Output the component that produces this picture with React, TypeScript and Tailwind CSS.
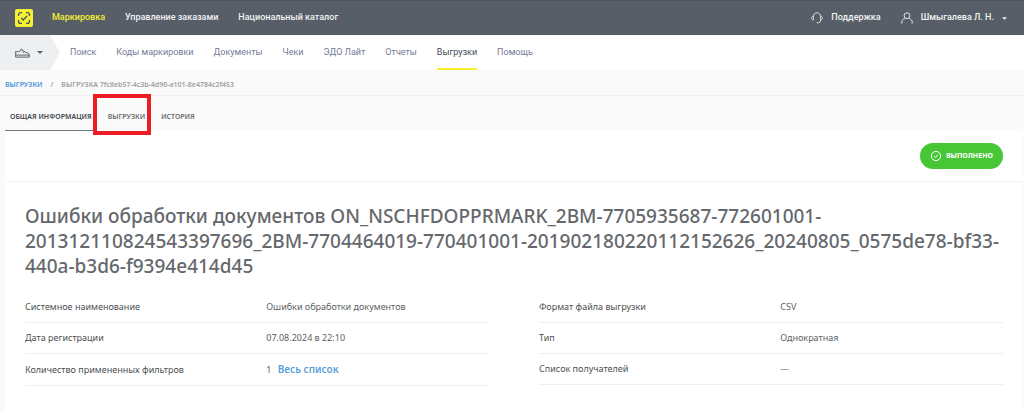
import type { ReactNode } from "react";

const sections = [
    { label: "Маркировка", active: true },
    { label: "Управление заказами", active: false },
    { label: "Национальный каталог", active: false },
];

const menu = [
    "Поиск",
    "Коды маркировки",
    "Документы",
    "Чеки",
    "ЭДО Лайт",
    "Отчеты",
    "Выгрузки",
    "Помощь",
];

const leftDetails: [string, ReactNode][] = [
    ["Системное наименование", "Ошибки обработки документов"],
    ["Дата регистрации", "07.08.2024 в 22:10"],
    [
        "Количество примененных фильтров",
        <>
            1{" "}
            <a href="#filters" className="ml-1 text-[10px] font-semibold text-[#5b9fd8]">
                Весь список
            </a>
        </>,
    ],
];

const rightDetails: [string, ReactNode][] = [
    ["Формат файла выгрузки", "CSV"],
    ["Тип", "Однократная"],
    ["Список получателей", "—"],
];

function Logo() {
    return (
        <svg viewBox="0 0 18 18" className="size-[18px]" fill="none">
            <rect width="18" height="18" rx="2" fill="#f4f032" />
            <g stroke="#4c525c" strokeWidth="1.3">
                <path d="M3.6 7V5.6a2 2 0 0 1 2-2H7M11 3.6h1.4a2 2 0 0 1 2 2V7M14.4 11v1.4a2 2 0 0 1-2 2H11M7 14.4H5.6a2 2 0 0 1-2-2V11" />
                <path d="m6.2 9 2 2 3.8-4" />
            </g>
        </svg>
    );
}

function Headset() {
    return (
        <svg viewBox="0 0 12 12" className="size-3" fill="none" stroke="#e4e6e9" strokeWidth="0.9">
            <path d="M2.4 4.5C2.4 2.2 4 .8 6 .8s3.6 1.4 3.6 3.7" />
            <path d="M2.4 4.3v3.6C1.3 7.9.6 7.2.6 6.1s.7-1.8 1.8-1.8ZM9.6 4.3v3.6c1.1 0 1.8-.7 1.8-1.8s-.7-1.8-1.8-1.8Z" />
            <path d="M9.6 7.9c0 1.9-1 2.9-2.6 2.9M5.6 10.8H7" />
        </svg>
    );
}

function Person() {
    return (
        <svg viewBox="0 0 12 12" className="size-3" fill="none" stroke="#e4e6e9" strokeWidth="1">
            <circle cx="6" cy="3.7" r="2.9" />
            <path d="M.8 11.6V10c0-1.8 1.3-3 3-3.4M11.2 11.6V10c0-1.8-1.3-3-3-3.4" />
        </svg>
    );
}

function Shoe() {
    return (
        <svg viewBox="0 0 15 10" className="h-2.5 w-[15px]" fill="none" stroke="#5c6168" strokeWidth="1">
            <path d="M.7 9.1V3.4c1.5.6 3 .5 4.2-.3L6.2.9l4.2 3.5 2.5.7c1 .3 1.4.9 1.4 1.8v2.2H.7Z" strokeLinejoin="round" />
            <path d="M.7 7.1h13.5M6.6 3.4l1.2-.8M8 4.7l1.2-.8" />
        </svg>
    );
}

function Caret({ className }: { className: string }) {
    return (
        <svg viewBox="0 0 6 3" className={className} fill="currentColor">
            <path d="M0 0h6L3 3Z" />
        </svg>
    );
}

function Details({ rows }: { rows: [string, ReactNode][] }) {
    return (
        <dl className="text-[9px] leading-[14px] text-[#4c4f53]">
            {rows.map(([name, value]) => (
                <div key={name} className="flex items-center border-b border-[#eeeff0] py-2">
                    <dt className="w-[52%]">{name}</dt>
                    <dd className="text-[#5c5f62]">{value}</dd>
                </div>
            ))}
        </dl>
    );
}

export default function App() {
    return (
        <div className="min-h-screen bg-[#fafafa] font-['Noto_Sans',sans-serif]">
            <header className="flex h-[35px] items-center border-t border-[#4b525d] bg-[#575e68] px-[15px] font-[Roboto,sans-serif] text-[9px] font-medium text-[#f1f2f3]">
                <a href="#home" aria-label="Главная">
                    <Logo />
                </a>
                <nav className="ml-[19px] flex gap-5">
                    {sections.map((s) => (
                        <a key={s.label} href="#section" className={s.active ? "text-[#f4f032]" : ""}>
                            {s.label}
                        </a>
                    ))}
                </nav>
                <a href="#support" className="ml-auto flex items-center gap-2">
                    <Headset />
                    Поддержка
                </a>
                <button type="button" className="mr-0.5 ml-5 flex items-center gap-2">
                    <Person />
                    Шмыгалева Л. Н.
                    <Caret className="h-[3px] w-[5px]" />
                </button>
            </header>

            <div className="flex h-[35px] bg-white font-[Roboto,sans-serif] text-[9px] text-[#737a96]">
                <button
                    type="button"
                    aria-label="Товарная группа"
                    className="flex w-[60px] items-center gap-[7px] bg-[#eeeff0] pl-[15px] text-[#5c6168] [clip-path:polygon(0_0,50px_0,100%_50%,50px_100%,0_100%)]"
                >
                    <Shoe />
                    <Caret className="h-[3px] w-[6px]" />
                </button>
                <nav className="ml-2.5 flex gap-5">
                    {menu.map((item) => (
                        <a
                            key={item}
                            href="#menu"
                            className={
                                item === "Выгрузки"
                                    ? "flex items-center border-y-2 border-t-transparent border-b-[#f7ef2c] pt-px text-[#434957]"
                                    : "flex items-center pt-px"
                            }
                        >
                            {item}
                        </a>
                    ))}
                </nav>
            </div>

            <nav className="flex h-[26px] items-center gap-2 border-b border-[#f1f1f1] px-[5px] pt-1.5 text-[7px] font-semibold text-[#a0a0a0]">
                <a href="#exports" className="text-[#4a95dd]">
                    ВЫГРУЗКИ
                </a>
                <span>/</span>
                <span>ВЫГРУЗКА 7fc8eb57-4c3b-4d90-a101-8e4784c2f453</span>
            </nav>

            <div role="tablist" className="flex h-[35px] gap-1.5 px-[5px] text-[7px] font-semibold text-[#6a6d70]">
                <button type="button" role="tab" aria-selected="true" className="border-y border-t-transparent border-b-[#70757d] px-[5px] pt-2 text-[#44484d]">
                    ОБЩАЯ ИНФОРМАЦИЯ
                </button>
                <button type="button" role="tab" aria-selected="false" className="relative px-[5px] pt-2">
                    ВЫГРУЗКИ
                    <span className="absolute -top-0.5 -right-px -bottom-1 -left-2.5 border-4 border-[#ed1c24]" />
                </button>
                <button type="button" role="tab" aria-selected="false" className="px-[5px] pt-2">
                    ИСТОРИЯ
                </button>
            </div>

            <main className="mr-px ml-[5px] min-h-[280px] bg-white">
                <div className="flex h-[51px] items-center justify-end border-b border-[#f3f3f3] px-5">
                    <div className="flex h-[26px] items-center gap-1 rounded-full bg-[#48c736] px-2.5 text-[7px] font-bold text-white">
                        <svg viewBox="0 0 12 12" className="size-3" fill="none" stroke="currentColor">
                            <circle cx="6" cy="6" r="4.6" />
                            <path d="m4 6 1.5 1.5L8.2 4.6" />
                        </svg>
                        ВЫПОЛНЕНО
                    </div>
                </div>
                <div className="px-5 pt-[22px]">
                    <h1 className="text-[19px] leading-[25px] font-medium text-[#65686c]">
                        Ошибки обработки документов ON_NSCHFDOPPRMARK_2BM-7705935687-772601001-201312110824543397696_2BM-7704464019-770401001-201902180220112152626_20240805_0575de78-bf33-440a-b3d6-f9394e414d45
                    </h1>
                    <div className="mt-[13px] grid grid-cols-2 items-start gap-[50px]">
                        <Details rows={leftDetails} />
                        <Details rows={rightDetails} />
                    </div>
                </div>
            </main>
        </div>
    );
}
